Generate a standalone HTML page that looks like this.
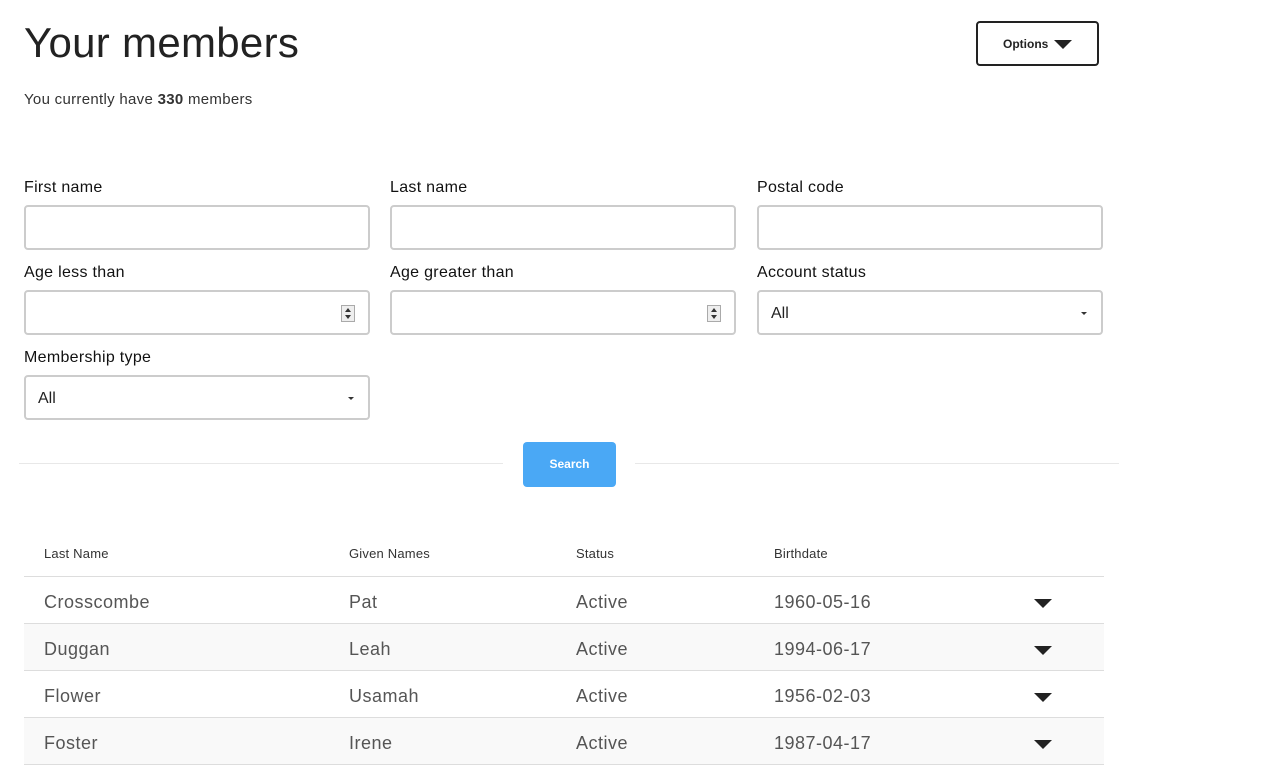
<!DOCTYPE html>
<html><head><style>
*{box-sizing:border-box;margin:0;padding:0}
body{width:1270px;height:760px;overflow:hidden;background:#fff;font-family:"Liberation Sans",sans-serif;color:#222;position:relative}
.a{position:absolute}
h1{position:absolute;left:24px;top:19px;font-weight:300;font-size:42px;color:#222;letter-spacing:0.3px}
.lbl{position:absolute;font-size:16px;color:#111;letter-spacing:0.3px}
.inp{position:absolute;width:346px;height:45px;border:2px solid #ccc;border-radius:4px;font-size:16px;padding:13px 12px;color:#222}
.spin{position:absolute;right:13px;top:13px;width:14px;height:17px;border:1px solid #aaa;background:#eee}
.spin:before{content:"";position:absolute;left:3px;top:2px;border:3px solid transparent;border-bottom:4px solid #333;border-top:0}
.spin:after{content:"";position:absolute;left:3px;top:9px;border:3px solid transparent;border-top:4px solid #333;border-bottom:0}
.caret{position:absolute;right:14px;top:20px;border:3px solid transparent;border-top:3px solid #333;border-bottom:0}
.row{position:absolute;left:24px;width:1080px;height:47px;border-bottom:1px solid #ddd;font-size:18px;color:#555;letter-spacing:0.5px}
.row span{position:absolute;top:15px}
.tri{position:absolute;left:1010px;top:22px;border:9px solid transparent;border-top:9px solid #222;border-bottom:0}
.hd{position:absolute;top:546px;font-size:13px;color:#333;letter-spacing:0.2px}
</style></head><body>
<h1>Your members</h1>
<div class="a" style="left:976px;top:21px;width:123px;height:45px;border:2px solid #222;border-radius:4px"><span class="a" style="left:25px;top:14px;font-size:12px;font-weight:bold">Options</span><div class="a" style="left:76px;top:17px;border:9px solid transparent;border-top:9px solid #222;border-bottom:0"></div></div>
<div class="a" style="left:24px;top:91px;font-size:15px;color:#333;letter-spacing:0.3px">You currently have <b>330</b> members</div>
<div class="lbl" style="left:24px;top:179px">First name</div>
<div class="lbl" style="left:390px;top:179px">Last name</div>
<div class="lbl" style="left:757px;top:179px">Postal code</div>
<div class="inp" style="left:24px;top:205px"></div>
<div class="inp" style="left:390px;top:205px"></div>
<div class="inp" style="left:757px;top:205px"></div>
<div class="lbl" style="left:24px;top:264px">Age less than</div>
<div class="lbl" style="left:390px;top:264px">Age greater than</div>
<div class="lbl" style="left:757px;top:264px">Account status</div>
<div class="inp" style="left:24px;top:290px"><div class="spin"></div></div>
<div class="inp" style="left:390px;top:290px"><div class="spin"></div></div>
<div class="inp" style="left:757px;top:290px">All<div class="caret"></div></div>
<div class="lbl" style="left:24px;top:349px">Membership type</div>
<div class="inp" style="left:24px;top:375px">All<div class="caret"></div></div>
<div class="a" style="left:19px;top:463px;width:484px;height:1px;background:#e8e8e8"></div>
<div class="a" style="left:635px;top:463px;width:484px;height:1px;background:#e8e8e8"></div>
<div class="a" style="left:523px;top:442px;width:93px;height:45px;background:#4aa8f5;border-radius:4px;color:#fff;font-size:12px;font-weight:bold;text-align:center;line-height:45px">Search</div>
<div class="hd" style="left:44px">Last Name</div>
<div class="hd" style="left:349px">Given Names</div>
<div class="hd" style="left:576px">Status</div>
<div class="hd" style="left:774px">Birthdate</div>
<div class="a" style="left:24px;top:576px;width:1080px;height:1px;background:#ddd"></div>
<div class="row" style="top:577px"><span style="left:20px">Crosscombe</span><span style="left:325px">Pat</span><span style="left:552px">Active</span><span style="left:750px">1960-05-16</span><div class="tri"></div></div>
<div class="row" style="top:624px;background:#f9f9f9"><span style="left:20px">Duggan</span><span style="left:325px">Leah</span><span style="left:552px">Active</span><span style="left:750px">1994-06-17</span><div class="tri"></div></div>
<div class="row" style="top:671px"><span style="left:20px">Flower</span><span style="left:325px">Usamah</span><span style="left:552px">Active</span><span style="left:750px">1956-02-03</span><div class="tri"></div></div>
<div class="row" style="top:718px;background:#f9f9f9"><span style="left:20px">Foster</span><span style="left:325px">Irene</span><span style="left:552px">Active</span><span style="left:750px">1987-04-17</span><div class="tri"></div></div>
</body></html>
